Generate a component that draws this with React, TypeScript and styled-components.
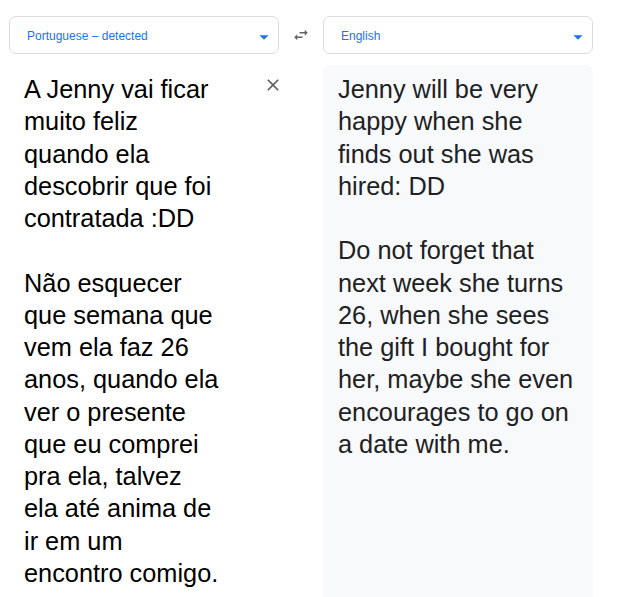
import React from "react";
import styled, { createGlobalStyle } from "styled-components";

const Global = createGlobalStyle`
  html, body { margin: 0; padding: 0; background: #ffffff; overflow: hidden; }
  body { font-family: "Liberation Sans", Arial, sans-serif; }
`;

const Page = styled.div`
  display: grid;
  grid-template-columns: 270px 44px 270px;
  grid-template-rows: 38px auto;
  row-gap: 11px;
  padding: 16px 0 0 9px;
  width: 622px;
  height: 597px;
  box-sizing: border-box;
  overflow: hidden;
`;

const Select = styled.div`
  display: flex;
  align-items: center;
  justify-content: space-between;
  box-sizing: border-box;
  height: 38px;
  border: 1px solid #dadce0;
  border-radius: 7px;
  padding: 1px 3.5px 0 17px;
  color: #1a73e8;
  font-size: 12px;
  background: #fff;
`;

const CaretBox = styled.span`
  display: flex;
  margin-top: 3px;
`;

const SwapCell = styled.div`
  display: flex;
  align-items: center;
  justify-content: center;
  color: #5f6368;
`;

const SourcePanel = styled.div`
  display: flex;
  justify-content: space-between;
  align-items: flex-start;
  padding: 8px 0 0 15px;
`;

const Text = styled.div<{ $tone: string; $width: number }>`
  width: ${(p) => p.$width}px;
  font-size: 25.33px;
  line-height: 32.27px;
  color: ${(p) => p.$tone};
  white-space: pre-wrap;
  word-wrap: break-word;
`;

const CloseButton = styled.button`
  display: flex;
  align-items: center;
  justify-content: center;
  width: 20px;
  height: 20px;
  margin: 2px -4px 0 0;
  padding: 0;
  border: none;
  background: transparent;
  color: #5f6368;
`;

const TargetPanel = styled.div`
  grid-column: 3;
  background: #f8f9fa;
  border-radius: 8px 8px 0 0;
  padding: 8px 0 0 15px;
  min-height: 560px;
`;

const Caret = () => (
  <CaretBox>
    <svg width="22" height="22" viewBox="0 0 24 24" fill="#1a73e8">
      <path d="M7 10l5 5 5-5z" />
    </svg>
  </CaretBox>
);

const SwapIcon = () => (
  <svg width="18" height="18" viewBox="0 0 24 24" fill="currentColor">
    <path d="M6.99 11L3 15l3.99 4v-3H14v-2H6.99v-3zM21 9l-3.99-4v3H10v2h7.01v3L21 9z" />
  </svg>
);

const CloseIcon = () => (
  <svg width="20" height="20" viewBox="0 0 24 24" fill="currentColor">
    <path d="M19 6.41L17.59 5 12 10.59 6.41 5 5 6.41 10.59 12 5 17.59 6.41 19 12 13.41 17.59 19 19 17.59 13.41 12z" />
  </svg>
);

const source =
  "A Jenny vai ficar muito feliz quando ela descobrir que foi contratada :DD\n\nNão esquecer que semana que vem ela faz 26 anos, quando ela ver o presente que eu comprei pra ela, talvez ela até anima de ir em um encontro comigo.";

const target =
  "Jenny will be very happy when she finds out she was hired: DD\n\nDo not forget that next week she turns 26, when she sees the gift I bought for her, maybe she even encourages to go on a date with me.";

export default function App() {
  return (
    <>
      <Global />
      <Page>
        <Select>
          <span>Portuguese – detected</span>
          <Caret />
        </Select>
        <SwapCell>
          <SwapIcon />
        </SwapCell>
        <Select>
          <span>English</span>
          <Caret />
        </Select>
        <SourcePanel>
          <Text $tone="#000000" $width={196}>{source}</Text>
          <CloseButton aria-label="Clear">
            <CloseIcon />
          </CloseButton>
        </SourcePanel>
        <TargetPanel>
          <Text $tone="#202124" $width={237}>{target}</Text>
        </TargetPanel>
      </Page>
    </>
  );
}
